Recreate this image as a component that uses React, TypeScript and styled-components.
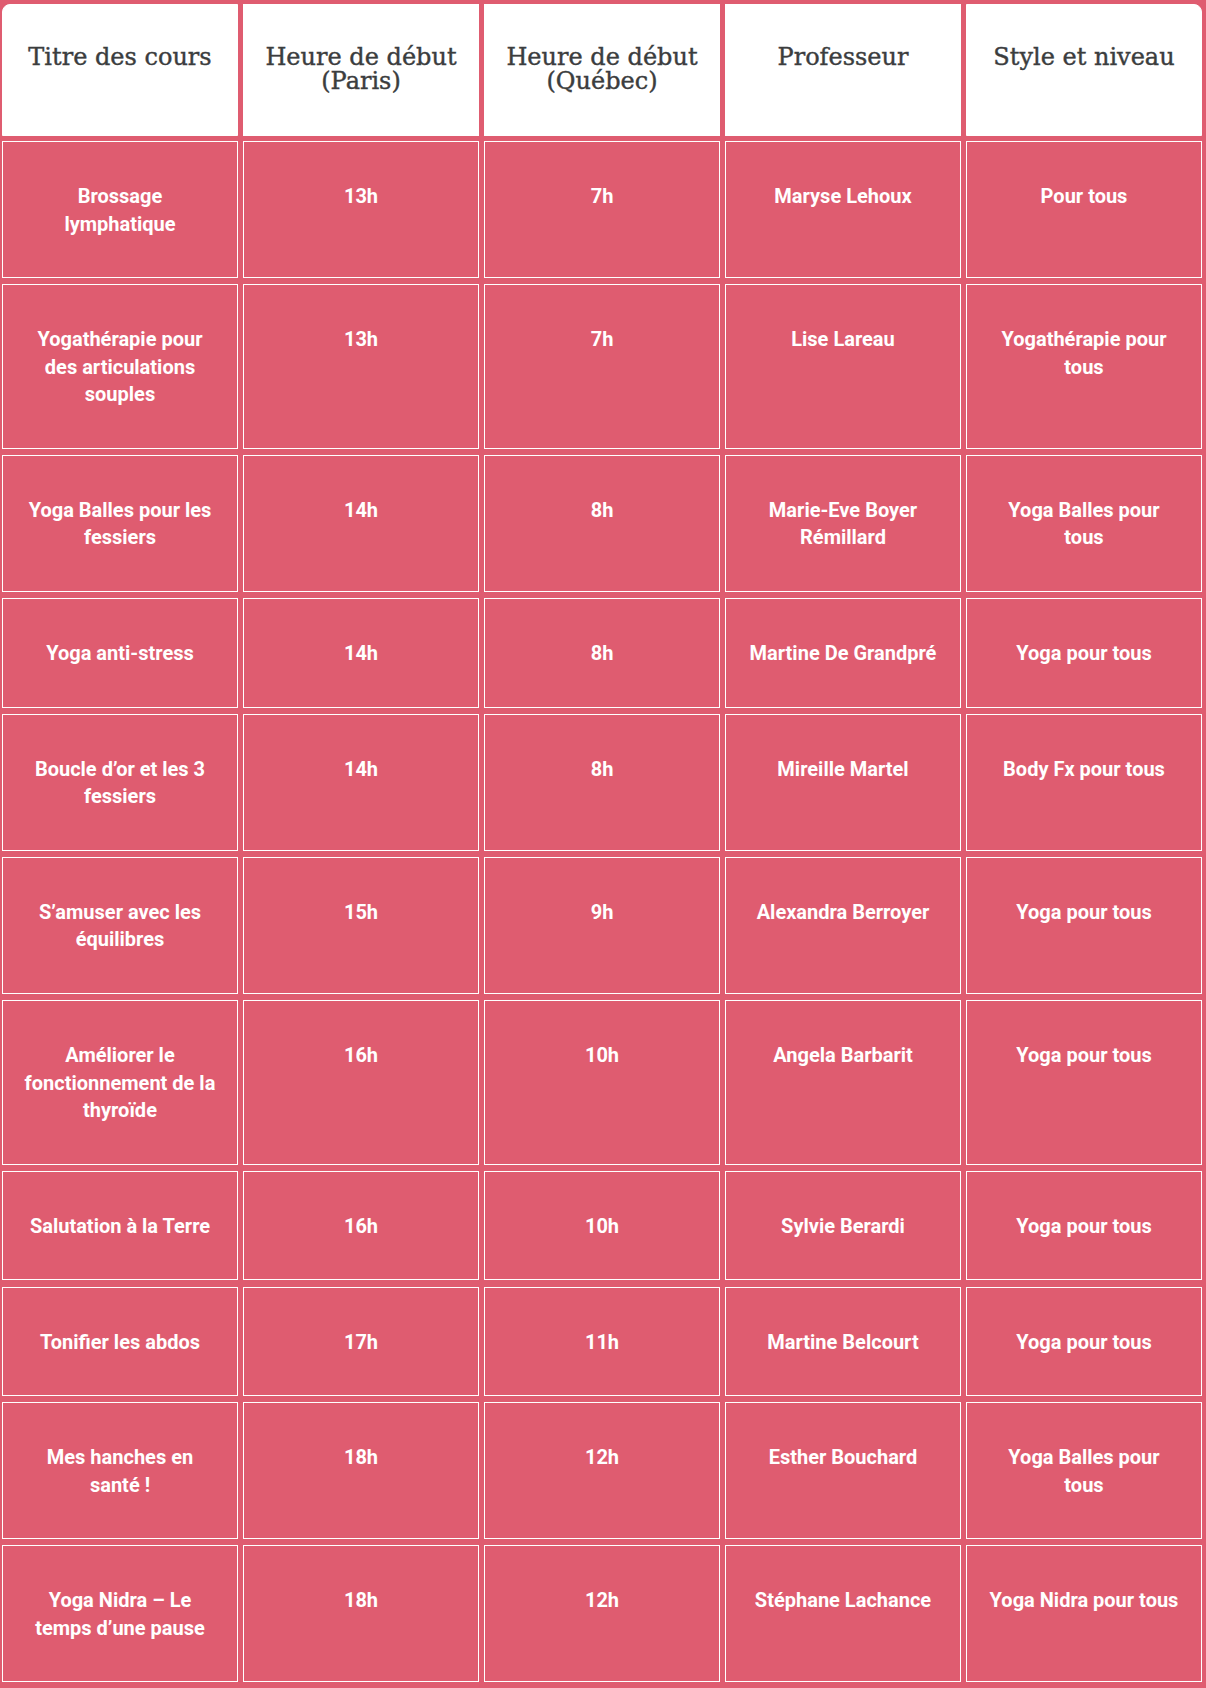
import React from "react";
import styled, { createGlobalStyle } from "styled-components";

const GlobalStyle = createGlobalStyle`
  html, body {
    margin: 0;
    padding: 0;
    background: #df5c70;
  }
`;

const Page = styled.div`
  min-height: 1688px;
  background: #df5c70;
  padding: 4px 4px 8px 2px;
  box-sizing: border-box;
`;

const Schedule = styled.div`
  display: flex;
  flex-direction: column;
  gap: 5px;
`;

const Body = styled.div`
  display: flex;
  flex-direction: column;
  gap: 6.2px;
`;

const Row = styled.div`
  display: grid;
  grid-template-columns: repeat(5, 236px);
  column-gap: 5px;
`;

const HeadCell = styled.div<{ $corner?: "left" | "right" }>`
  background: #ffffff;
  border: 1px solid #ffffff;
  padding: 40px 10px 42px;
  text-align: center;
  font-family: "DejaVu Serif", "Liberation Serif", serif;
  font-size: 24px;
  line-height: 24px;
  color: #3b3d3e;
  -webkit-text-stroke: 0.4px #3b3d3e;
  border-top-left-radius: ${(p) => (p.$corner === "left" ? "8px" : "0")};
  border-top-right-radius: ${(p) => (p.$corner === "right" ? "8px" : "0")};
`;

const Cell = styled.div`
  border: 1px solid #ffffff;
  padding: 41px 20px 39px;
  text-align: center;
  font-family: Roboto, "Liberation Sans", sans-serif;
  font-weight: 700;
  font-size: 20px;
  line-height: 27.5px;
  color: #ffffff;
`;

const headers = [
  "Titre des cours",
  "Heure de début (Paris)",
  "Heure de début (Québec)",
  "Professeur",
  "Style et niveau",
];

const courses: string[][] = [
  ["Brossage lymphatique", "13h", "7h", "Maryse Lehoux", "Pour tous"],
  ["Yogathérapie pour des articulations souples", "13h", "7h", "Lise Lareau", "Yogathérapie pour tous"],
  ["Yoga Balles pour les fessiers", "14h", "8h", "Marie-Eve Boyer Rémillard", "Yoga Balles pour tous"],
  ["Yoga anti-stress", "14h", "8h", "Martine De Grandpré", "Yoga pour tous"],
  ["Boucle d’or et les 3 fessiers", "14h", "8h", "Mireille Martel", "Body Fx pour tous"],
  ["S’amuser avec les équilibres", "15h", "9h", "Alexandra Berroyer", "Yoga pour tous"],
  ["Améliorer le fonctionnement de la thyroïde", "16h", "10h", "Angela Barbarit", "Yoga pour tous"],
  ["Salutation à la Terre", "16h", "10h", "Sylvie Berardi", "Yoga pour tous"],
  ["Tonifier les abdos", "17h", "11h", "Martine Belcourt", "Yoga pour tous"],
  ["Mes hanches en santé !", "18h", "12h", "Esther Bouchard", "Yoga Balles pour tous"],
  ["Yoga Nidra – Le temps d’une pause", "18h", "12h", "Stéphane Lachance", "Yoga Nidra pour tous"],
];

export default function App() {
  return (
    <>
      <GlobalStyle />
      <Page>
        <Schedule>
          <Row>
            {headers.map((h, i) => (
              <HeadCell
                key={h}
                $corner={i === 0 ? "left" : i === headers.length - 1 ? "right" : undefined}
              >
                {h}
              </HeadCell>
            ))}
          </Row>
          <Body>
            {courses.map((row) => (
              <Row key={row[0]}>
                {row.map((c, i) => (
                  <Cell key={i}>{c}</Cell>
                ))}
              </Row>
            ))}
          </Body>
        </Schedule>
      </Page>
    </>
  );
}
